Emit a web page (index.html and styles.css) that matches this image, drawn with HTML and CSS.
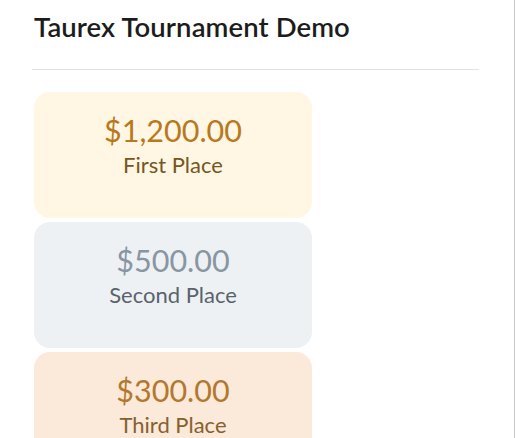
FILE: index.html
```html
<!DOCTYPE html>
<html lang="en">
<head>
    <meta charset="UTF-8">
    <meta name="viewport" content="width=device-width, initial-scale=1.0">
    <title>Taurex Tournament Demo</title>
    <link rel="stylesheet" href="styles.css">
</head>
<body>
    <div class="panel">
        <div class="panel-header">
            <h1>Taurex Tournament Demo</h1>
        </div>

        <div class="prize-list">
            <div class="prize first">
                <div class="prize-amount">$1,200.00</div>
                <div class="prize-label">First Place</div>
            </div>
            <div class="prize second">
                <div class="prize-amount">$500.00</div>
                <div class="prize-label">Second Place</div>
            </div>
            <div class="prize third">
                <div class="prize-amount">$300.00</div>
                <div class="prize-label">Third Place</div>
            </div>
        </div>
    </div>
</body>
</html>
```

FILE: styles.css
```css
* {
    margin: 0;
    padding: 0;
    box-sizing: border-box;
}

body {
    font-family: Lato, 'Noto Sans', sans-serif;
    background-color: #ffffff;
    overflow: hidden;
}

.panel {
    width: 515px;
    height: 438px;
    border-right: 1px solid #c9c9c9;
    padding: 0 35px 0 32px;
    overflow: hidden;
}

.panel-header {
    padding: 8px 0 23px 2px;
    border-bottom: 1px solid #e2e2e2;
}

.panel-header h1 {
    font-size: 27.5px;
    font-weight: 600;
    color: #1c1c1c;
    line-height: 38px;
    letter-spacing: 0.1px;
}

.prize-list {
    display: flex;
    flex-direction: column;
    gap: 4px;
    padding: 22px 0 0 2px;
    width: 280px;
}

.prize {
    flex-shrink: 0;
    height: 126px;
    border-radius: 16px;
    text-align: center;
    padding-top: 19px;
}

.prize-amount {
    font-size: 30.5px;
    line-height: 38px;
}

.prize-label {
    margin-top: 3px;
    font-size: 22px;
    line-height: 26px;
}

.first {
    background-color: #fff6e4;
}

.first .prize-amount {
    color: #b8781e;
}

.first .prize-label {
    color: #76571f;
}

.second {
    background-color: #edf1f4;
}

.second .prize-amount {
    color: #8796a2;
}

.second .prize-label {
    color: #59636c;
}

.third {
    background-color: #fbe9d9;
}

.third .prize-amount {
    color: #b3782e;
}

.third .prize-label {
    color: #87602e;
}
```
